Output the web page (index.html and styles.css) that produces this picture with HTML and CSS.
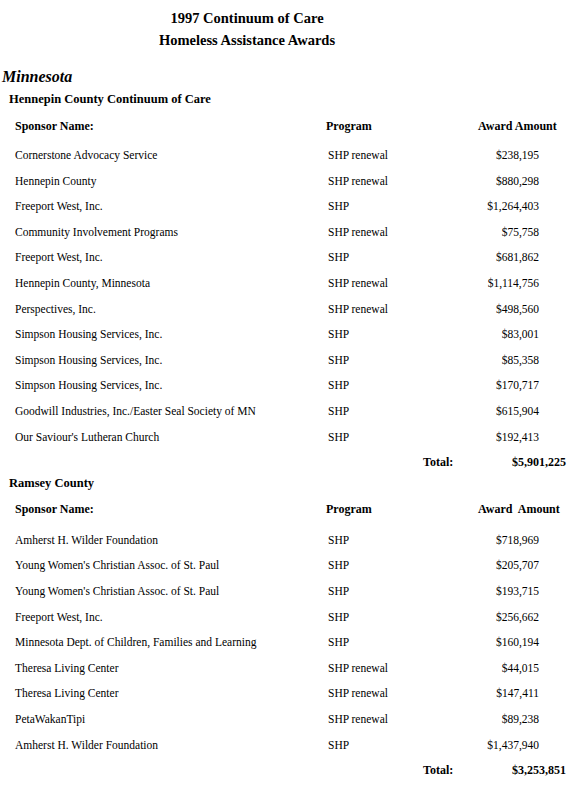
FILE: index.html
```html
<!DOCTYPE html>
<html>
<head>
<meta charset="utf-8">
<link rel="stylesheet" href="styles.css">
</head>
<body>
<div class="title">
  <div>1997 Continuum of Care</div>
  <div>Homeless Assistance Awards</div>
</div>
<div class="state">Minnesota</div>

<div class="section first">
  <div class="county">Hennepin County Continuum of Care</div>
  <div class="row head"><span class="name">Sponsor Name:</span><span class="prog">Program</span><span class="amt">Award Amount</span></div>
  <div class="rows">
    <div class="row"><span class="name">Cornerstone Advocacy Service</span><span class="prog">SHP renewal</span><span class="amt">$238,195</span></div>
    <div class="row"><span class="name">Hennepin County</span><span class="prog">SHP renewal</span><span class="amt">$880,298</span></div>
    <div class="row"><span class="name">Freeport West, Inc.</span><span class="prog">SHP</span><span class="amt">$1,264,403</span></div>
    <div class="row"><span class="name">Community Involvement Programs</span><span class="prog">SHP renewal</span><span class="amt">$75,758</span></div>
    <div class="row"><span class="name">Freeport West, Inc.</span><span class="prog">SHP</span><span class="amt">$681,862</span></div>
    <div class="row"><span class="name">Hennepin County, Minnesota</span><span class="prog">SHP renewal</span><span class="amt">$1,114,756</span></div>
    <div class="row"><span class="name">Perspectives, Inc.</span><span class="prog">SHP renewal</span><span class="amt">$498,560</span></div>
    <div class="row"><span class="name">Simpson Housing Services, Inc.</span><span class="prog">SHP</span><span class="amt">$83,001</span></div>
    <div class="row"><span class="name">Simpson Housing Services, Inc.</span><span class="prog">SHP</span><span class="amt">$85,358</span></div>
    <div class="row"><span class="name">Simpson Housing Services, Inc.</span><span class="prog">SHP</span><span class="amt">$170,717</span></div>
    <div class="row"><span class="name">Goodwill Industries, Inc./Easter Seal Society of MN</span><span class="prog">SHP</span><span class="amt">$615,904</span></div>
    <div class="row"><span class="name">Our Saviour's Lutheran Church</span><span class="prog">SHP</span><span class="amt">$192,413</span></div>
  </div>
  <div class="total"><span class="tlabel">Total:</span><span class="tamt">$5,901,225</span></div>
</div>

<div class="section second">
  <div class="county">Ramsey County</div>
  <div class="row head"><span class="name">Sponsor Name:</span><span class="prog">Program</span><span class="amt">Award&nbsp; Amount</span></div>
  <div class="rows">
    <div class="row"><span class="name">Amherst H. Wilder Foundation</span><span class="prog">SHP</span><span class="amt">$718,969</span></div>
    <div class="row"><span class="name">Young Women's Christian Assoc. of St. Paul</span><span class="prog">SHP</span><span class="amt">$205,707</span></div>
    <div class="row"><span class="name">Young Women's Christian Assoc. of St. Paul</span><span class="prog">SHP</span><span class="amt">$193,715</span></div>
    <div class="row"><span class="name">Freeport West, Inc.</span><span class="prog">SHP</span><span class="amt">$256,662</span></div>
    <div class="row"><span class="name">Minnesota Dept. of Children, Families and Learning</span><span class="prog">SHP</span><span class="amt">$160,194</span></div>
    <div class="row"><span class="name">Theresa Living Center</span><span class="prog">SHP renewal</span><span class="amt">$44,015</span></div>
    <div class="row"><span class="name">Theresa Living Center</span><span class="prog">SHP renewal</span><span class="amt">$147,411</span></div>
    <div class="row"><span class="name">PetaWakanTipi</span><span class="prog">SHP renewal</span><span class="amt">$89,238</span></div>
    <div class="row"><span class="name">Amherst H. Wilder Foundation</span><span class="prog">SHP</span><span class="amt">$1,437,940</span></div>
  </div>
  <div class="total"><span class="tlabel">Total:</span><span class="tamt">$3,253,851</span></div>
</div>
</body>
</html>
```

FILE: styles.css
```css
html, body {
  margin: 0;
  padding: 0;
  background: #ffffff;
  color: #000000;
  font-family: "Liberation Serif", "Times New Roman", serif;
}

.title {
  width: 494px;
  margin-top: 7px;
  text-align: center;
  font-weight: bold;
  font-size: 14.5px;
  line-height: 22px;
}

.state {
  margin-top: 16px;
  padding-left: 2px;
  font-style: italic;
  font-weight: bold;
  font-size: 16px;
  line-height: 20px;
}

.county {
  padding-left: 9px;
  font-weight: bold;
  font-size: 12.5px;
  line-height: 20px;
}

.section.first {
  margin-top: 2px;
}

.section.first .head {
  margin-top: 4px;
}

.section.second .county {
  line-height: 18px;
}

.section.second .head {
  margin-top: 5px;
}

.row {
  display: grid;
  grid-template-columns: 313px 150px 61px;
  padding-left: 15px;
  height: 25.6px;
  align-items: center;
  font-size: 11.5px;
  white-space: nowrap;
}

.row .amt {
  text-align: right;
}

.row.head {
  height: 26px;
  font-size: 12px;
  font-weight: bold;
}

.row.head .prog {
  margin-left: -2px;
}

.row.head .amt {
  text-align: left;
}

.rows {
  margin-top: 3.2px;
}

.section.second .rows {
  margin-top: 4.2px;
}

.total {
  display: grid;
  grid-template-columns: 423px 34px 109px;
  height: 22px;
  margin-top: 2.5px;
  align-items: center;
  font-size: 12px;
  font-weight: bold;
  white-space: nowrap;
}

.tlabel {
  grid-column: 2;
}

.tamt {
  grid-column: 3;
  text-align: right;
}
```
